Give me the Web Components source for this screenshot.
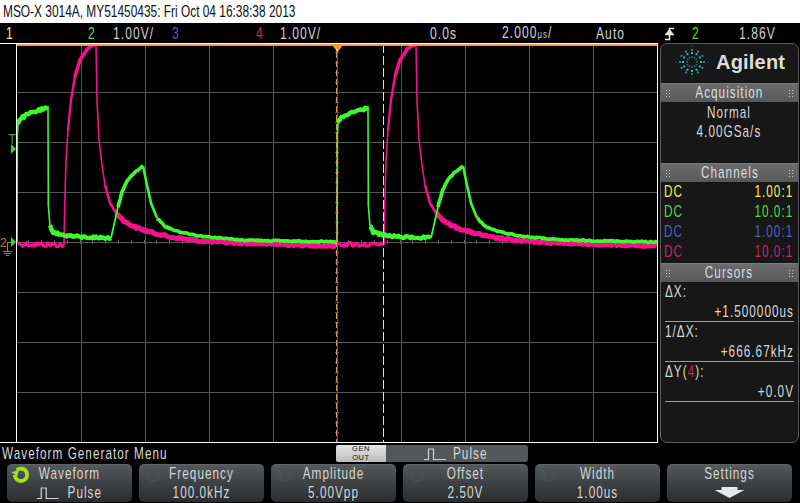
<!DOCTYPE html>
<html>
<head>
<meta charset="utf-8">
<style>
  html, body { margin: 0; background: #000; }
  body { width: 800px; height: 503px; overflow: hidden; font-family: "Liberation Sans", sans-serif; --sx: 0.69; }
</style>
</head>
<body>
<scope-title>MSO-X 3014A, MY51450435: Fri Oct 04 16:38:38 2013</scope-title>
<scope-status>
  <span style="color:#f4f060">1</span>
  <span style="color:#62d04e">2</span>
  <span>1.00V/</span>
  <span style="color:#4f5fa8">3</span>
  <span style="color:#c8245f">4</span>
  <span>1.00V/</span>
  <span>0.0s</span>
  <span>2.000<small style="font-size:11px">µs</small>/</span>
  <span>Auto</span>
  <trigger-icon></trigger-icon>
  <span style="color:#62d04e">2</span>
  <span>1.86V</span>
</scope-status>
<scope-main>
  <scope-screen></scope-screen>
  <info-panel>
    <panel-section heading="Acquisition" style="--body-h:61px">
      <panel-line center>Normal</panel-line>
      <panel-line center>4.00GSa/s</panel-line>
    </panel-section>
    <panel-section heading="Channels" style="--body-h:81px">
      <panel-line style="color:#f4f060"><span>DC</span><span>1.00:1</span></panel-line>
      <panel-line style="color:#62d04e"><span>DC</span><span>10.0:1</span></panel-line>
      <panel-line style="color:#4f5fc0"><span>DC</span><span>1.00:1</span></panel-line>
      <panel-line style="color:#c8245f"><span>DC</span><span>10.0:1</span></panel-line>
    </panel-section>
    <panel-section heading="Cursors" style="--body-h:160px">
      <cursor-readout value="+1.500000us">ΔX:</cursor-readout>
      <cursor-readout value="+666.67kHz">1/ΔX:</cursor-readout>
      <cursor-readout value="+0.0V">ΔY(<span style="color:#c8245f">4</span>):</cursor-readout>
    </panel-section>
  </info-panel>
</scope-main>
<menu-bar>Waveform Generator Menu</menu-bar>
<softkey-row>
  <soft-key label="Waveform" knob="on"><pulse-icon style="width:32px"></pulse-icon>&nbsp;&nbsp;Pulse</soft-key>
  <soft-key label="Frequency" knob="off">100.0kHz</soft-key>
  <soft-key label="Amplitude" knob="off">5.00Vpp</soft-key>
  <soft-key label="Offset" knob="off">2.50V</soft-key>
  <soft-key label="Width" knob="off">1.00us</soft-key>
  <soft-key label="Settings"><svg width="43" height="11" viewBox="0 0 30 11" preserveAspectRatio="none" style="display:block;margin:3px auto 0"><path d="M7 0h16v3h7L15 11 0 3h7z" fill="#e8e8e8"/></svg></soft-key>
</softkey-row>

<script>
class ScopeTitle extends HTMLElement {
  constructor() {
    super();
    this.attachShadow({ mode: 'open' }).innerHTML = `
      <style>
        :host { display: block; height: 23px; background: #fff; color: #111; padding-left: 3px; font-size: 17px; line-height: 23px; white-space: nowrap; overflow: hidden; }
        div { transform: scaleX(0.7); transform-origin: left; }
      </style>
      <div><slot></slot></div>`;
  }
}

class ScopeStatus extends HTMLElement {
  constructor() {
    super();
    this.attachShadow({ mode: 'open' }).innerHTML = `
      <style>
        :host {
          display: grid; height: 20px; padding-left: 6px; align-items: center;
          grid-template-columns: 82px 25px 59px 84px 24px 150px 72px 94px 69px 27px 47px 55px;
          color: #d0d0d0; font-size: 17px; line-height: 20px; letter-spacing: 1.5px; white-space: nowrap;
        }
        ::slotted(span) { display: block; transform: scaleX(0.71); transform-origin: left; }
      </style>
      <slot></slot>`;
  }
}

class TriggerIcon extends HTMLElement {
  constructor() {
    super();
    this.attachShadow({ mode: 'open' }).innerHTML = `
      <style>:host { display: block; height: 14px; } svg { display: block; }</style>
      <svg width="10" height="14" viewBox="0 0 10 14"><path d="M0 12.5h4.5V1.5H9M1 7.5h7L4.5 3z" fill="none" stroke="#e8e8e8" stroke-width="1.5"/><path d="M1 8h7L4.5 4z" fill="#e8e8e8"/></svg>`;
  }
}

class ScopeMain extends HTMLElement {
  constructor() {
    super();
    this.attachShadow({ mode: 'open' }).innerHTML = `
      <style>:host { display: flex; height: 400px; }</style>
      <slot></slot>`;
  }
}

// small seeded generator so the trace noise is the same every run
let seed = 12345;
function rnd() {
  seed = (seed * 1103515245 + 12345) & 0x7fffffff;
  return seed / 0x7fffffff;
}

function trace(pts, dx, amp) {
  const out = [];
  for (let i = 0; i < pts.length - 1; i++) {
    const [x0, y0] = pts[i], [x1, y1] = pts[i + 1];
    const n = amp ? Math.max(1, Math.round(Math.hypot(x1 - x0, y1 - y0) / 1.5)) : 1;
    for (let k = 0; k < n; k++) {
      const t = k / n;
      out.push((x0 + (x1 - x0) * t + dx).toFixed(1) + ',' + (y0 + (y1 - y0) * t + (rnd() - 0.5) * amp).toFixed(1));
    }
  }
  const last = pts[pts.length - 1];
  out.push((last[0] + dx) + ',' + last[1]);
  return out.join(' ');
}

const PINK = [
  { w: 3.2, a: 4.5, p: [[18, 244], [64, 245]] },
  { w: 1.6, a: 0, p: [[64, 245], [64.5, 215], [66, 160], [68, 130]] },
  { w: 2.4, a: 0, p: [[68, 130], [71, 100], [75, 76]] },
  { w: 3.6, a: 1, p: [[75, 76], [80, 60], [88, 48], [96, 44]] },
  { w: 1.6, a: 0, p: [[96, 44], [97, 100], [99, 140], [102, 165], [105, 185]] },
  { w: 2.6, a: 0.4, p: [[105, 185], [110, 203], [116, 213]] },
  { w: 5, a: 2, p: [[116, 213], [125, 222], [135, 227], [150, 232], [170, 237], [200, 241], [240, 243], [300, 245], [337, 246]] }
];

const GREEN = [
  { w: 1.8, a: 0, p: [[17, 242], [17.3, 135], [18, 123]] },
  { w: 4.4, a: 2.6, p: [[18, 123], [20, 119], [25, 116], [33, 112], [48, 108]] },
  { w: 1.6, a: 0, p: [[48, 106], [48.3, 205], [50, 226]] },
  { w: 4.4, a: 2.4, p: [[50, 226], [53, 232], [62, 235], [80, 237], [111, 238]] },
  { w: 1.8, a: 0, p: [[111, 238], [114, 225], [118, 207]] },
  { w: 3.6, a: 1, p: [[118, 207], [122, 192], [127, 181], [134, 173], [143, 166]] },
  { w: 2.6, a: 0, p: [[143, 166], [147, 185], [151, 203], [157, 218]] },
  { w: 3.6, a: 1.2, p: [[157, 218], [166, 227], [180, 232], [200, 236], [240, 240], [337, 242]] }
];

class ScopeScreen extends HTMLElement {
  constructor() {
    super();
    let grid = '';
    for (let x = 81; x < 657; x += 64) grid += `<path d="M${x} 44V442"/>`;
    for (let y = 92; y < 442; y += 50) grid += `<path d="M16 ${y}H657"/>`;
    let ticks = '';
    for (let x = 16; x < 657; x += 12.8) ticks += `M${x.toFixed(1)} 240v4M${x.toFixed(1)} 44v2`;
    for (let y = 52; y < 442; y += 10) ticks += `M335 ${y}h4`;
    let traces = '';
    const draw = (segs, color) => {
      for (const dx of [0, 320]) {
        for (const s of segs) {
          traces += `<polyline points="${trace(s.p, dx, s.a)}" fill="none" stroke="${color}" stroke-width="${s.w}" stroke-linejoin="round"/>`;
        }
      }
    };
    draw(PINK, '#f5108c');
    draw(GREEN, '#3cfa2c');
    this.attachShadow({ mode: 'open' }).innerHTML = `
      <style>
        :host { display: block; width: 660px; height: 400px; }
        svg { display: block; }
        .grid path { stroke: #555; stroke-width: 1; shape-rendering: crispEdges; }
        text { font-family: "Liberation Sans", sans-serif; }
      </style>
      <svg width="660" height="400" viewBox="0 43 660 400">
        <defs><clipPath id="plot"><rect x="17" y="44" width="640" height="398"/></clipPath></defs>
        <g class="grid">${grid}</g>
        <path d="${ticks}" stroke="#5a5a5a" stroke-width="1" shape-rendering="crispEdges"/>
        <g clip-path="url(#plot)">${traces}</g>
        <path d="M336 52V442" stroke="#d8955a" stroke-width="1" stroke-dasharray="6 3" shape-rendering="crispEdges"/>
        <path d="M383 44V442" stroke="#f8dcb4" stroke-width="1" stroke-dasharray="9 3" shape-rendering="crispEdges"/>
        <path d="M0 43.5H657.5M0 442.5H657.5M16.5 43V443M657.5 43V443" stroke="#fff" fill="none" stroke-width="1" shape-rendering="crispEdges"/>
        <path d="M17 44.5H657" stroke="#f59a4c" stroke-width="2" shape-rendering="crispEdges"/>
        <path d="M331 44h13l-6.5 8z" fill="#f59a28"/>
        <path d="M337 52v-3" stroke="#fff"/>
        <text x="8" y="144" fill="#3fa83a" font-size="15" transform="translate(2.2 0) scale(.8 1)">T</text>
        <path d="M11 144l5 5-5 5z" fill="#3fd03a"/>
        <text x="0" y="247" fill="#b9803f" font-size="12">2</text>
        <path d="M11 237l5 5-5 5z" fill="#3fd03a"/>
        <path d="M7 242h4M7 242v9M3 251h9M4 253h7M6 255h3" stroke="#3fb03a" stroke-width="1" fill="none" shape-rendering="crispEdges"/>
      </svg>`;
  }
}

class InfoPanel extends HTMLElement {
  constructor() {
    super();
    let dots = '';
    for (let i = 0; i < 12; i++) {
      const a = i * Math.PI / 6;
      [5, 9, 12, 16].forEach((r, j) => {
        if (j === 3 && i % 3 !== 0) return;
        const s = j === 0 ? 1.5 : (j === 3 ? 1 : 2);
        const col = j === 1 ? '#48b0c0' : '#2c7f8c';
        dots += `<rect x="${(20 + r * Math.cos(a) - s / 2).toFixed(1)}" y="${(20 + r * Math.sin(a) - s / 2).toFixed(1)}" width="${s}" height="${s}" fill="${col}"/>`;
      });
    }
    this.attachShadow({ mode: 'open' }).innerHTML = `
      <style>
        :host {
          display: block; box-sizing: border-box; width: 139px; height: 400px;
          background: #171717; border: 1px solid #5c5c5c; border-radius: 7px; overflow: hidden;
          color: #d8d8d8;
        }
        .logo { display: flex; align-items: center; height: 39px; box-sizing: border-box; padding: 0 0 3px 11px; }
        .logo svg { display: block; }
        .logo b { margin-left: 4px; font: bold 20px "Liberation Sans", sans-serif; color: #dcdcdc; letter-spacing: 0.2px; }
      </style>
      <div class="logo">
        <svg width="40" height="40" viewBox="0 0 40 40">${dots}</svg>
        <b>Agilent</b>
      </div>
      <slot></slot>`;
  }
}

class PanelSection extends HTMLElement {
  constructor() {
    super();
    const heading = this.getAttribute('heading');
    this.attachShadow({ mode: 'open' }).innerHTML = `
      <style>
        :host { display: block; }
        .head {
          display: flex; align-items: center; justify-content: space-between; height: 19px; padding: 0 4px;
          background: linear-gradient(#6a6c6e, #56585a); border-top: 1px solid #7a7c7e; box-sizing: border-box;
          font-size: 17px; letter-spacing: 1.5px; color: #dcdcdc;
        }
        .head b { font-weight: normal; transform: scaleX(var(--sx)); }
        .grip { width: 6px; height: 9px; background: radial-gradient(circle, #c4c4c4 0.8px, transparent 1px) 0 0 / 3px 3px; }
        .body { height: var(--body-h, 60px); box-sizing: border-box; }
      </style>
      <div class="head"><span class="grip"></span><b>${heading}</b><span class="grip"></span></div>
      <div class="body"><slot></slot></div>`;
  }
}

class PanelLine extends HTMLElement {
  constructor() {
    super();
    const center = this.hasAttribute('center');
    this.attachShadow({ mode: 'open' }).innerHTML = `
      <style>
        :host { display: flex; justify-content: space-between; height: 20px; padding: 0 5px 0 3px; font-size: 17px; line-height: 20px; letter-spacing: 1.5px; white-space: nowrap; }
        :host([center]) { justify-content: center; height: 18px; padding-top: 1px; }
        div { transform: scaleX(var(--sx)); }
        ::slotted(span) { transform: scaleX(var(--sx)); }
        ::slotted(span:first-child) { transform-origin: left; }
        ::slotted(span:last-child) { transform-origin: right; }
      </style>
      ${center ? '<div><slot></slot></div>' : '<slot></slot>'}`;
  }
}

class CursorReadout extends HTMLElement {
  constructor() {
    super();
    const value = this.getAttribute('value');
    this.attachShadow({ mode: 'open' }).innerHTML = `
      <style>
        :host { display: block; box-sizing: border-box; height: 40px; margin: 0 4px; border-bottom: 1px solid #a0a0a0; font-size: 17px; line-height: 20px; letter-spacing: 1.5px; white-space: nowrap; }
        .k { transform: scaleX(var(--sx)); transform-origin: left; }
        .v { text-align: right; transform: scaleX(var(--sx)); transform-origin: right; }
      </style>
      <div class="k"><slot></slot></div>
      <div class="v">${value}</div>`;
  }
}

class MenuBar extends HTMLElement {
  constructor() {
    super();
    this.attachShadow({ mode: 'open' }).innerHTML = `
      <style>
        :host { display: flex; height: 21px; align-items: center; color: #d8d8d8; font-size: 17px; letter-spacing: 1.5px; white-space: nowrap; }
        .name { box-sizing: border-box; width: 336px; padding-left: 3px; transform: scaleX(var(--sx)); transform-origin: left; }
        .gen {
          width: 50px; height: 17px; background: linear-gradient(#e4e4e4, #bcbcbc); border-radius: 2px 0 0 2px; color: #111;
          font: 7.5px/8.6px "Liberation Sans", sans-serif; text-align: center; letter-spacing: 0.6px;
        }
        .type {
          display: flex; align-items: center; justify-content: center; gap: 7px; width: 142px; height: 17px;
          background: #54575a; border-radius: 0 3px 3px 0;
        }
        .type span { margin-right: -14px; transform: scaleX(var(--sx)); transform-origin: left; }
      </style>
      <div class="name"><slot></slot></div>
      <div class="gen">GEN<br>OUT</div>
      <div class="type"><pulse-icon></pulse-icon><span>Pulse</span></div>`;
  }
}

class PulseIcon extends HTMLElement {
  constructor() {
    super();
    this.attachShadow({ mode: 'open' }).innerHTML = `
      <style>:host { display: inline-block; width: 22px; height: 12px; vertical-align: -1px; } svg { display: block; width: 100%; height: 100%; }</style>
      <svg viewBox="0 0 22 12" preserveAspectRatio="none"><path d="M0 11.5H4.5V1H9.5V11.5H22" fill="none" stroke="#d0d0d0" stroke-width="1.2"/></svg>`;
  }
}

class SoftkeyRow extends HTMLElement {
  constructor() {
    super();
    this.attachShadow({ mode: 'open' }).innerHTML = `
      <style>:host { display: flex; gap: 7px; height: 38px; padding-left: 7px; }</style>
      <slot></slot>`;
  }
}

class SoftKey extends HTMLElement {
  constructor() {
    super();
    const knob = this.getAttribute('knob');
    const col = knob === 'on' ? '#a6e01c' : '#4c5052';
    const sw = knob === 'on' ? 3.8 : 1.2;
    const icon = knob ? `<svg class="knob" width="20" height="20" viewBox="0 0 20 20"><path d="M5.8 5.2A6.2 6.2 0 1 1 3.8 10" fill="none" stroke="${col}" stroke-width="${sw}"/><path d="M0.5 7.5L8 4.5 6.5 11z" fill="${col}"/></svg>` : '';
    this.attachShadow({ mode: 'open' }).innerHTML = `
      <style>
        :host {
          display: block; position: relative; box-sizing: border-box; width: 125px; height: 38px; border-radius: 5px;
          background: linear-gradient(#55595b, #404345 45%, #2a2d2f);
          border-top: 1px solid #5f6365; color: #d4d4d4; text-align: center;
          font-size: 17px; line-height: 18px; letter-spacing: 1.5px; white-space: nowrap;
        }
        .knob { position: absolute; left: 4px; top: 0; }
        .t { transform: scaleX(var(--sx)); }
        .l { height: 19px; }
      </style>
      ${icon}
      <div class="t l">${this.getAttribute('label')}</div>
      <div class="t"><slot></slot></div>`;
  }
}

customElements.define('scope-title', ScopeTitle);
customElements.define('scope-status', ScopeStatus);
customElements.define('trigger-icon', TriggerIcon);
customElements.define('scope-main', ScopeMain);
customElements.define('scope-screen', ScopeScreen);
customElements.define('info-panel', InfoPanel);
customElements.define('panel-section', PanelSection);
customElements.define('panel-line', PanelLine);
customElements.define('cursor-readout', CursorReadout);
customElements.define('menu-bar', MenuBar);
customElements.define('pulse-icon', PulseIcon);
customElements.define('softkey-row', SoftkeyRow);
customElements.define('soft-key', SoftKey);
</script>
</body>
</html>
